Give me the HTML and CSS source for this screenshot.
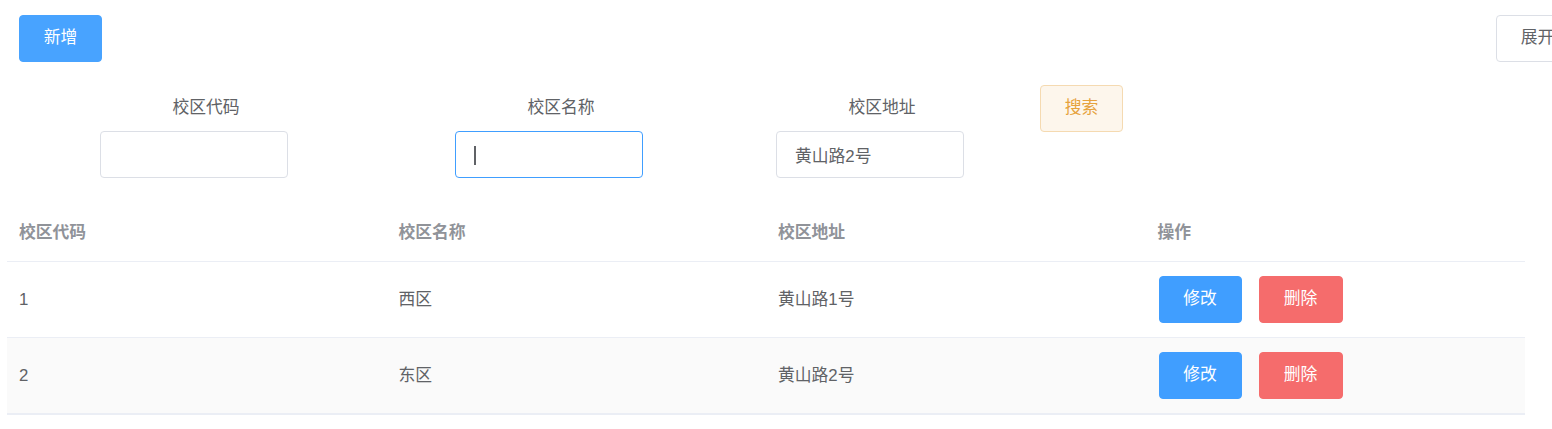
FILE: index.html
```html
<!DOCTYPE html>
<html lang="zh-CN">
<head>
<meta charset="utf-8">
<title>校区管理</title>
<link rel="stylesheet" href="styles.css">
</head>
<body>
<div class="page">
  <div class="toolbar">
    <button class="btn btn-primary btn-add" type="button">新增</button>
    <button class="btn btn-default" type="button">展开</button>
  </div>
  <form class="search-form">
    <div class="form-item">
      <label class="form-label">校区代码</label>
      <input class="form-input" type="text" value="">
    </div>
    <div class="form-item">
      <label class="form-label">校区名称</label>
      <div class="input-wrap">
        <input class="form-input is-focus" type="text" value="">
        <span class="caret"></span>
      </div>
    </div>
    <div class="form-item">
      <label class="form-label">校区地址</label>
      <input class="form-input" type="text" value="黄山路2号">
    </div>
    <button class="btn btn-warning-plain" type="button">搜索</button>
  </form>
  <table class="data-table">
    <thead>
      <tr>
        <th><div class="cell">校区代码</div></th>
        <th><div class="cell">校区名称</div></th>
        <th><div class="cell">校区地址</div></th>
        <th><div class="cell">操作</div></th>
      </tr>
    </thead>
    <tbody>
      <tr>
        <td><div class="cell">1</div></td>
        <td><div class="cell">西区</div></td>
        <td><div class="cell">黄山路1号</div></td>
        <td><div class="cell actions"><button class="btn btn-primary" type="button">修改</button><button class="btn btn-danger" type="button">删除</button></div></td>
      </tr>
      <tr class="striped">
        <td><div class="cell">2</div></td>
        <td><div class="cell">东区</div></td>
        <td><div class="cell">黄山路2号</div></td>
        <td><div class="cell actions"><button class="btn btn-primary" type="button">修改</button><button class="btn btn-danger" type="button">删除</button></div></td>
      </tr>
    </tbody>
  </table>
</div>
</body>
</html>
```
FILE: styles.css
```css
html {
  overflow: hidden;
}
body {
  margin: 0;
  font-family: "Liberation Sans", "Noto Sans CJK SC", sans-serif;
  font-size: 16.8px;
  color: #606266;
  background: #fff;
}
.page {
  padding: 15px 0 0 7px;
}
.btn {
  box-sizing: border-box;
  height: 47px;
  width: 83px;
  padding: 0;
  border: 1px solid transparent;
  border-radius: 4px;
  font-family: inherit;
  font-size: 16.8px;
  line-height: 1;
  cursor: pointer;
}
.btn-primary {
  background: #409eff;
  border-color: #409eff;
  color: #fff;
}
.btn-add {
  background: #48a3ff;
  border-color: #48a3ff;
}
.btn-danger {
  background: #f56c6c;
  border-color: #f56c6c;
  color: #fff;
  width: 84px;
}
.btn-default {
  background: #fff;
  border-color: #dcdfe6;
  color: #606266;
}
.btn-warning-plain {
  background: #fdf6ec;
  border-color: #f5dab1;
  color: #e6a23c;
}
.toolbar {
  box-sizing: border-box;
  display: flex;
  justify-content: space-between;
  width: 1572px;
  padding-left: 12px;
}
.search-form {
  display: grid;
  grid-template-columns: 355px 321px 264px 83px;
  align-items: start;
  margin: 23px 0 0 93px;
}
.form-item {
  display: flex;
  flex-direction: column;
  width: 188px;
}
.form-label {
  height: 46px;
  line-height: 46px;
  padding-left: 24px;
  text-align: center;
  color: #606266;
}
.input-wrap {
  position: relative;
}
.form-input {
  box-sizing: border-box;
  display: block;
  width: 188px;
  height: 47px;
  padding: 0 18px;
  border: 1px solid #dcdfe6;
  border-radius: 4px;
  font-family: inherit;
  font-size: 16.8px;
  color: #606266;
  background: #fff;
  outline: none;
}
.form-input.is-focus {
  border-color: #409eff;
}
.caret {
  position: absolute;
  left: 19px;
  top: 15px;
  width: 2px;
  height: 19px;
  background: #606266;
}
.data-table {
  margin-top: 27px;
  width: 1518px;
  table-layout: fixed;
  border-collapse: separate;
  border-spacing: 0;
  border-bottom: 1px solid #ebeef5;
}
.data-table th,
.data-table td {
  padding: 0 12px;
  text-align: left;
  border-bottom: 1px solid #ebeef5;
}
.data-table th {
  font-weight: bold;
  color: #909399;
}
.data-table th .cell {
  height: 56px;
  line-height: 56px;
}
.data-table td {
  padding-top: 14px;
  padding-bottom: 14px;
}
.data-table td .cell {
  height: 47px;
  line-height: 47px;
}
.striped td {
  background: #fafafa;
}
.actions {
  display: flex;
  gap: 17px;
  padding-left: 1px;
}
```
